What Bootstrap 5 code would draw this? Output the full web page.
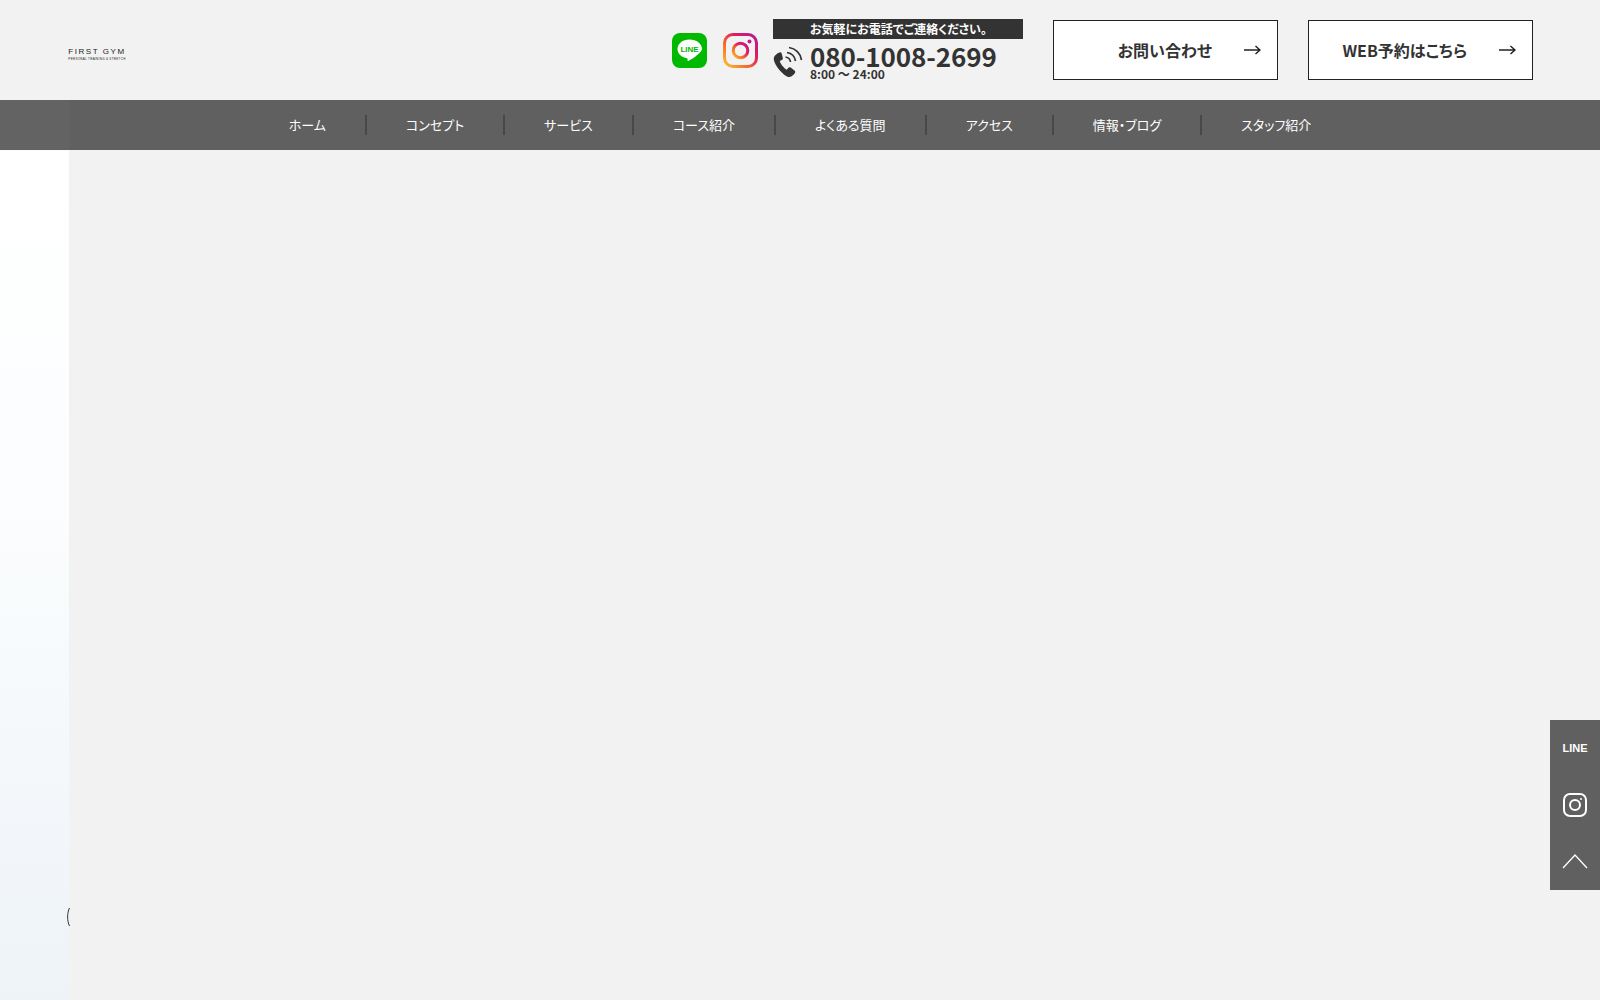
<!DOCTYPE html>
<html lang="ja">
<head>
    <meta charset="UTF-8">
    <title>FIRST GYM</title>
    <link href="https://cdn.jsdelivr.net/npm/bootstrap@5.3.0/dist/css/bootstrap.min.css" rel="stylesheet">
    <style>
        body { background: #f2f2f2; color: #333; height: 1000px; overflow: hidden; font-family: "Noto Sans CJK JP", "Noto Sans", sans-serif; font-feature-settings: "palt"; }
        .site-head { height: 100px; padding: 0 67px 0 66px; }
        .logo-box { margin-top: 9px; line-height: 1; color: #222; font-family: "Liberation Sans", sans-serif; text-align: center; width: 62px; }
        .logo-main { font-size: 8px; letter-spacing: 1.55px; white-space: nowrap; }
        .logo-sub { font-size: 3px; letter-spacing: .3px; margin-top: 2px; white-space: nowrap; }
        .social-ico { width: 35px; height: 35px; display: block; }
        .tel-box { width: 250px; margin-left: 15px; }
        .tel-title { background: #333; color: #fff; height: 20px; line-height: 20px; font-size: 12px; font-weight: 700; padding-left: 37px; }
        .tel-row { height: 42px; }
        .tel-ico { width: 31px; height: 32px; margin: 7px 6px 0 0; flex: none; }
        .tel-num { font-size: 26px; font-weight: 700; line-height: 26px; margin-top: 4px; letter-spacing: -.1px; }
        .tel-time { font-size: 12px; font-weight: 700; line-height: 12px; margin-top: -1px; }
        .cta-btn { width: 225px; height: 60px; margin-left: 30px; background: #fff; border: 1px solid #222; border-radius: 0; color: #333; font-size: 16px; font-weight: 700; padding: 0 16px 0 0; }
        .cta-arrow { width: 17px; height: 10px; margin-left: 32px; flex: none; }
        .cta-label { flex: 1; text-align: right; }
        .main-nav { height: 50px; background: #606060; }
        .main-nav a { color: #fff; font-size: 13px; line-height: 20px; text-decoration: none; padding: 0 39px; border-right: 2px solid #484848; height: 20px; display: block; white-space: nowrap; }
        .main-nav a:last-child { border-right: 0; }
        .side-strip { position: fixed; left: 0; top: 100px; width: 69px; height: 900px; background: linear-gradient(180deg, rgba(255,255,255,.02) 0, rgba(255,255,255,.02) 50px, #fff 51px, #fbfdfe 45%, #eef3f8 100%); }
        .strip-arc { position: fixed; left: 66px; top: 907px; width: 5px; height: 20px; }
        .side-float { position: fixed; right: 0; top: 720px; width: 50px; height: 170px; background: #606060; color: #fff; }
        .side-float div { height: 56.6px; }
        .float-line { font-family: "Liberation Sans", sans-serif; font-size: 11px; font-weight: 700; }
    </style>
</head>
<body>
<header class="site-head d-flex align-items-center">
    <div class="logo-box">
        <div class="logo-main">FIRST GYM</div>
        <div class="logo-sub">PERSONAL TRAINING &amp; STRETCH</div>
    </div>
    <div class="ms-auto d-flex align-items-center">
        <a href="#" class="me-3">
            <svg class="social-ico" viewBox="0 0 35 35">
                <rect width="35" height="35" rx="8" fill="#00b900"/>
                <path d="M17.500 6.500C10.600 6.500 5.500 10.700 5.500 16c0 4.700 3.900 8.400 9.500 9.200.9.200.6 1.100.5 2-.1.800.3 1 1 .7 2.500-1.200 8.100-4.600 10.300-7.300 2-1.900 3.200-3.200 3.200-4.600 0-5.300-5.400-9.500-12.500-9.500z" fill="#fff"/>
                <text x="17.500" y="19" text-anchor="middle" font-family="Liberation Sans" font-size="8" font-weight="700" fill="#00b900">LINE</text>
            </svg>
        </a>
        <a href="#">
            <svg class="social-ico" viewBox="0 0 35 35">
                <defs>
                    <linearGradient id="igGrad" x1="0" y1="1" x2="1" y2="0">
                        <stop offset="0" stop-color="#fdc030"/>
                        <stop offset=".35" stop-color="#f56c2c"/>
                        <stop offset=".65" stop-color="#e01e5a"/>
                        <stop offset="1" stop-color="#b5179e"/>
                    </linearGradient>
                </defs>
                <rect x="1.500" y="1.500" width="32" height="32" rx="8.500" fill="none" stroke="url(#igGrad)" stroke-width="3"/>
                <circle cx="17.500" cy="17.500" r="7.300" fill="none" stroke="url(#igGrad)" stroke-width="3"/>
                <circle cx="26.500" cy="8.500" r="2" fill="#c7197f"/>
            </svg>
        </a>
        <div class="tel-box">
            <div class="tel-title">お気軽にお電話でご連絡ください。</div>
            <div class="tel-row d-flex">
                <svg class="tel-ico" viewBox="0 0 31 32">
                    <path d="M6.500 6.500C3 8 0 10.500 1 14.500c1.500 5.500 7.500 13 13 16 3 1.500 6-.5 8-3.500.5-1 .2-1.800-.5-2.400l-3.800-3c-.9-.6-1.800-.4-2.500.4l-1.500 1.800c-2.800-1.500-6-5.700-7-8.700l2.200-1.200c.9-.5 1.200-1.400.8-2.400L8.600 7.200c-.4-.9-1.200-1.100-2.100-.7z" fill="#333"/>
                    <g fill="none" stroke="#333" stroke-width="1.700">
                        <path d="M12.500 11c2.700.4 4.600 2.300 5 5"/>
                        <path d="M14 6.500c4.500.7 7.800 4 8.500 8.500"/>
                        <path d="M16 1.500c6.700 1 11.500 6 12.500 12.500"/>
                    </g>
                </svg>
                <div>
                    <div class="tel-num">080-1008-2699</div>
                    <div class="tel-time">8:00 ～ 24:00</div>
                </div>
            </div>
        </div>
        <a href="#" class="btn cta-btn d-flex align-items-center">
            <span class="cta-label">お問い合わせ</span>
            <svg class="cta-arrow" viewBox="0 0 17 10"><path d="M0 5h16M11.500 1l4.500 4-4.500 4" fill="none" stroke="#222" stroke-width="1.500"/></svg>
        </a>
        <a href="#" class="btn cta-btn d-flex align-items-center">
            <span class="cta-label">WEB予約はこちら</span>
            <svg class="cta-arrow" viewBox="0 0 17 10"><path d="M0 5h16M11.500 1l4.500 4-4.500 4" fill="none" stroke="#222" stroke-width="1.500"/></svg>
        </a>
    </div>
</header>
<nav class="main-nav d-flex justify-content-center align-items-center">
    <a href="#">ホーム</a>
    <a href="#">コンセプト</a>
    <a href="#">サービス</a>
    <a href="#">コース紹介</a>
    <a href="#">よくある質問</a>
    <a href="#">アクセス</a>
    <a href="#">情報・ブログ</a>
    <a href="#">スタッフ紹介</a>
</nav>
<div class="side-strip"></div>
<svg class="strip-arc" viewBox="0 0 5 20"><path d="M3.500 1C1 6 1 14 3.500 19" fill="none" stroke="#333" stroke-width="1"/></svg>
<aside class="side-float">
    <div class="float-line d-flex align-items-center justify-content-center">LINE</div>
    <div class="d-flex align-items-center justify-content-center">
        <svg width="24" height="24" viewBox="0 0 24 24" fill="none" stroke="#fff" stroke-width="2">
            <rect x="1" y="1" width="22" height="22" rx="6"/>
            <circle cx="12" cy="12" r="5"/>
            <circle cx="18" cy="6" r="1" fill="#fff" stroke="none"/>
        </svg>
    </div>
    <div class="d-flex align-items-center justify-content-center">
        <svg width="26" height="16" viewBox="0 0 26 16" fill="none" stroke="#fff" stroke-width="1.300"><path d="M1 15L13 2l12 13"/></svg>
    </div>
</aside>
<script src="https://cdn.jsdelivr.net/npm/bootstrap@5.3.0/dist/js/bootstrap.bundle.min.js"></script>
</body>
</html>
